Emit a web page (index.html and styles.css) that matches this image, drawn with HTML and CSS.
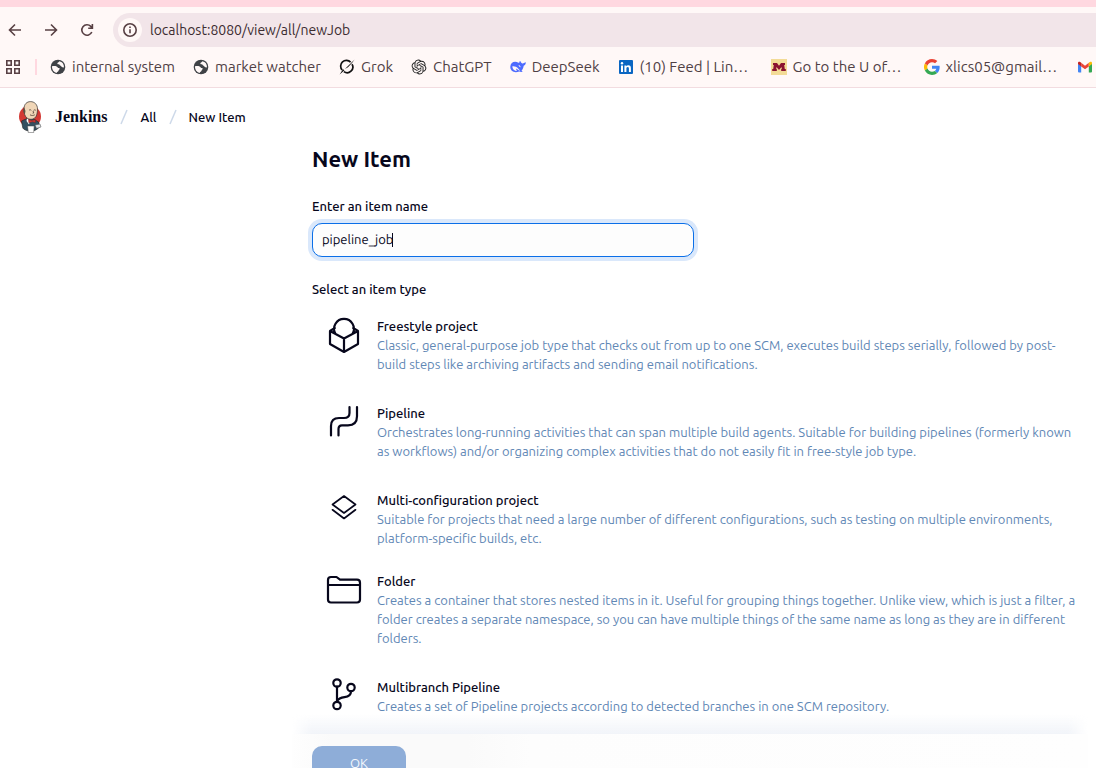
FILE: index.html
```html
<!DOCTYPE html>
<html lang="en">
<head>
<meta charset="utf-8">
<title>New Item - Jenkins</title>
<meta name="viewport" content="width=device-width, initial-scale=1">
<link rel="stylesheet" href="styles.css">
</head>
<body>
<div class="browser">
  <div class="tab-strip"></div>
  <div class="toolbar">
    <button class="nav-button" type="button" aria-label="Back"><svg class="icon" viewBox="0 0 16 16"><path d="M14 8H2.500M8 2.500 2.500 8 8 13.500"/></svg></button>
    <button class="nav-button" type="button" aria-label="Forward"><svg class="icon" viewBox="0 0 16 16"><path d="M2 8h11.500M8 2.500 13.500 8 8 13.500"/></svg></button>
    <button class="nav-button" type="button" aria-label="Reload"><svg class="icon" viewBox="0 0 16 16"><path d="M12.800 10A5.200 5.200 0 1 1 11.800 4.400L13.300 6M13.400 2v4.200H9.200"/></svg></button>
    <div class="address">
      <button class="site-info" type="button" aria-label="View site information"><svg class="icon" viewBox="0 0 16 16"><circle cx="8" cy="8" r="6.200"/><path d="M8 7.300v3.900M8 4.500v1.400"/></svg></button>
      <input class="url" type="text" aria-label="Address" value="localhost:8080/view/all/newJob">
    </div>
  </div>
  <nav class="bookmarks" aria-label="Bookmarks">
    <button class="apps" type="button" aria-label="Apps"><svg class="icon" viewBox="0 0 16 16"><path d="M1.800 1.800h4.400v4.400H1.800zM9.800 1.800h4.400v4.400H9.800zM1.800 9.800h4.400v4.400H1.800zM9.800 9.800h4.400v4.400H9.800z"/></svg></button>
    <span class="divider"></span>
    <a class="bookmark" href="#"><svg class="logo" viewBox="0 0 16 16"><circle cx="8" cy="8" r="7.300" fill="#3f4246"/><path d="M2 7.200c1.700-.2 3.500-.2 4.600.2 1.300.4 1 1.500 2.200 1.700 1 .2 1.300.8.500 1.500-.9.700-.6 1.700-1.600 2.100-.9.400-.9 1-1.200 1.300A6.200 6.200 0 0 1 2 7.200zM9.300 2.200c-.1 1-1.300 1-1.800 1.700-.5.900.3 1.500 1.300 1.400.8 0 .8 1 1.500 1.300 1 .4 1 1.400 2.100 1.600.7.100 1.100.4 1.600.1A6.200 6.200 0 0 0 9.300 2.200z" fill="#fff8f7"/></svg><span>internal system</span></a>
    <a class="bookmark" href="#"><svg class="logo" viewBox="0 0 16 16"><circle cx="8" cy="8" r="7.300" fill="#3f4246"/><path d="M2 7.200c1.700-.2 3.500-.2 4.600.2 1.300.4 1 1.500 2.200 1.700 1 .2 1.300.8.500 1.500-.9.700-.6 1.700-1.600 2.100-.9.400-.9 1-1.200 1.300A6.200 6.200 0 0 1 2 7.200zM9.300 2.200c-.1 1-1.300 1-1.800 1.700-.5.900.3 1.500 1.300 1.400.8 0 .8 1 1.500 1.300 1 .4 1 1.400 2.100 1.600.7.100 1.100.4 1.600.1A6.200 6.200 0 0 0 9.300 2.200z" fill="#fff8f7"/></svg><span>market watcher</span></a>
    <a class="bookmark" href="#"><svg class="logo" viewBox="0 0 16 16"><path d="M11.600 3.200A5.600 5.600 0 0 0 3.200 11M4.900 12.600A5.600 5.600 0 0 0 13 5.200" fill="none" stroke="#111" stroke-width="1.700"/><path d="M15.600.5 5.900 9.900 9 8.200l4.200-4.400zM.6 15.600 4 10.300l1.500 1z" fill="#111"/></svg><span>Grok</span></a>
    <a class="bookmark" href="#"><svg class="logo" viewBox="-1 -1 26 26"><path fill="#222" d="M22.282 9.821a5.985 5.985 0 0 0-.516-4.910 6.046 6.046 0 0 0-6.510-2.900A6.065 6.065 0 0 0 4.981 4.180a5.985 5.985 0 0 0-3.998 2.900 6.046 6.046 0 0 0 .743 7.097 5.980 5.980 0 0 0 .510 4.911 6.051 6.051 0 0 0 6.515 2.900A5.985 5.985 0 0 0 13.260 24a6.056 6.056 0 0 0 5.772-4.206 5.990 5.990 0 0 0 3.997-2.900 6.056 6.056 0 0 0-.747-7.073zM13.260 22.430a4.476 4.476 0 0 1-2.876-1.040l.141-.081 4.779-2.758a.795.795 0 0 0 .392-.681v-6.737l2.020 1.168a.071.071 0 0 1 .038.052v5.583a4.504 4.504 0 0 1-4.494 4.494zM3.600 18.304a4.470 4.470 0 0 1-.535-3.014l.142.085 4.783 2.759a.771.771 0 0 0 .780 0l5.843-3.369v2.332a.080.080 0 0 1-.033.062L9.740 19.950a4.500 4.500 0 0 1-6.140-1.646zM2.340 7.896a4.485 4.485 0 0 1 2.366-1.973V11.600a.766.766 0 0 0 .388.676l5.815 3.355-2.020 1.168a.076.076 0 0 1-.071 0l-4.830-2.786A4.504 4.504 0 0 1 2.340 7.872zm16.597 3.855-5.833-3.387L15.119 7.200a.076.076 0 0 1 .071 0l4.830 2.791a4.494 4.494 0 0 1-.676 8.105v-5.678a.790.790 0 0 0-.407-.667zm2.010-3.023-.141-.085-4.774-2.782a.776.776 0 0 0-.785 0L9.409 9.230V6.897a.066.066 0 0 1 .028-.061l4.830-2.787a4.500 4.500 0 0 1 6.680 4.660zM8.307 12.863l-2.020-1.164a.080.080 0 0 1-.038-.057V6.074a4.500 4.500 0 0 1 7.375-3.453l-.142.080L8.704 5.459a.795.795 0 0 0-.393.681zm1.097-2.365 2.602-1.500 2.607 1.500v2.999l-2.597 1.500-2.607-1.500z"/></svg><span>ChatGPT</span></a>
    <a class="bookmark" href="#"><svg class="logo" viewBox="0 0 16 16"><path fill="#4d6bfe" d="M.3 7.800C.5 4.500 2.600 2.800 5.100 2.800c1.300 0 2.400.3 3.200 1l1.200-.2c-.3-.7.1-1.400.8-1.600.4 1.300 1 2 2 2.400 1.200.2 2-.7 3.500-1.100.1 1.800-.8 3.100-2.100 3.400-.3 2-1 3.800-2.200 5l1.300.9c-1.200.6-2.500.4-3.600-.1C4.200 14.600.2 11.900.3 7.800z"/><path fill="#fff8f7" d="M2.300 7.400c2-.4 4.300.4 6.100 2.300l1.700 2.100c-1.600-.4-2.500-1.500-3.900-2.300-.2.900.2 1.700 1 2.600C4.300 12 2.400 10.100 2.300 7.400zM8.500 6.100c1.300.2 2 1 2.200 2.200-1-.2-2-1-2.200-2.200z"/></svg><span>DeepSeek</span></a>
    <a class="bookmark bookmark-full" href="#"><svg class="logo" viewBox="0 0 16 16"><rect x="1" y="1" width="14" height="14" rx="1" fill="#0a66c2"/><path fill="#fff" d="M3 6.400h2V13H3zM6.400 6.400h1.900v.9c.4-.7 1.100-1.100 2-1.100 2 0 2.600 1.200 2.600 3.200V13h-2V9.800c0-1.100-.2-1.800-1.200-1.800s-1.300.8-1.300 1.800V13h-2z"/><circle cx="4" cy="4.200" r="1.200" fill="#fff"/></svg><span>(10) Feed | Lin…</span></a>
    <a class="bookmark bookmark-full" href="#"><svg class="logo" viewBox="0 0 16 16"><path fill="#f3db96" d="M0 0h16v16H0z"/><path fill="#8b1230" d="M2 4h4l2 2.800L10 4h4v2h-.8l.6 4h1v2h-4.600v-2h.6l-.3-2L8 11 5.500 8l-.3 2h.6v2H1.200v-2h1l.6-4H2z"/></svg><span>Go to the U of…</span></a>
    <a class="bookmark bookmark-full" href="#"><svg class="logo" viewBox="0 0 48 48"><path fill="#ea4335" d="M24 9.500c3.540 0 6.710 1.220 9.210 3.600l6.850-6.850C35.900 2.380 30.470 0 24 0 14.620 0 6.510 5.380 2.560 13.220l7.980 6.190C12.430 13.720 17.740 9.500 24 9.500z"/><path fill="#4285f4" d="M46.980 24.550c0-1.570-.15-3.090-.38-4.550H24v9.020h12.940c-.58 2.960-2.260 5.480-4.780 7.180l7.730 6c4.510-4.180 7.090-10.360 7.090-17.650z"/><path fill="#fbbc05" d="M10.530 28.590a14.500 14.500 0 0 1 0-9.180l-7.980-6.190a24 24 0 0 0 0 21.560z"/><path fill="#34a853" d="M24 48c6.480 0 11.930-2.130 15.890-5.810l-7.730-6c-2.150 1.450-4.920 2.300-8.160 2.300-6.260 0-11.570-4.220-13.470-9.910l-7.980 6.190C6.510 42.620 14.620 48 24 48z"/></svg><span>xlics05@gmail…</span></a>
    <a class="bookmark" href="#" aria-label="Gmail"><svg class="logo" viewBox="0 0 16 16"><path fill="#4285f4" d="M1 4.500 4.200 7v6.500H2A1 1 0 0 1 1 12.500z"/><path fill="#34a853" d="M15 4.500 11.800 7v6.500H14a1 1 0 0 0 1-1z"/><path fill="#ea4335" d="M4.200 3.800 8 6.700l3.800-2.900v3.600L8 10.300 4.200 7.400z"/><path fill="#c5221f" d="M1 4.300c0-1.600 1.400-1.800 2.200-1.200l1 .7v3.600L1 5z"/><path fill="#fbbc04" d="M15 4.300c0-1.600-1.400-1.800-2.200-1.200l-1 .7v3.600L15 5z"/></svg></a>
  </nav>
</div>

<header class="header">
  <a class="brand" href="#">
    <svg class="mascot" viewBox="0 0 24 32">
      <ellipse cx="12" cy="15.500" rx="11" ry="11" fill="#d33833"/>
      <path d="M3.500 20 9 17.500l7 .5 5 3.500v4.500c-1 2.500-4.500 4-8.500 4S5.500 28.500 4.800 27z" fill="#335061" stroke="#222" stroke-width=".6"/>
      <path d="M6 8C6 3 9 .6 12.500.6c4 0 7 3 7 7.400 0 2-.2 4-.8 6-.9 2.700-3 4.300-5.700 4.300-3.500 0-5.400-2-6.400-5z" fill="#f0d6b7" stroke="#333" stroke-width=".7"/>
      <path d="M6.200 6.500 7.500 10l-.7 3.500C5 12 4.800 8.700 6.200 6.500z" fill="#5c5346"/>
      <path d="M11 9.300c.8-.7 1.700-.6 2.300 0M15.600 9.300c.8-.6 1.600-.5 2.200.1M12 13.800c1.600 1 3.500.8 4.800 0M15 10l.8 2-1.200.2" fill="none" stroke="#4a3b32" stroke-width=".8"/>
      <path d="m9 17.500 3 2-1 4L8.500 20z" fill="#fff"/>
      <path d="m10.500 18.500 3.200 1 3.500-.8.300 2.800-3.100-.7-3.500 1z" fill="#d33833" stroke="#7c1d1b" stroke-width=".5"/>
      <path d="M9.500 25h6.700l-.5 6.600h-5.400z" fill="#fff" stroke="#444" stroke-width=".5"/>
      <path d="m17 24 5-1 1 3-4.500 1.500z" fill="#dce3e8" stroke="#444" stroke-width=".5"/>
    </svg>
    <span>Jenkins</span>
  </a>
  <nav class="crumbs" aria-label="Breadcrumb">
    <svg class="slash" viewBox="0 0 8 16"><path d="M7 1 1 15"/></svg>
    <a class="crumb" href="#">All</a>
    <svg class="slash" viewBox="0 0 8 16"><path d="M7 1 1 15"/></svg>
    <a class="crumb" href="#">New Item</a>
  </nav>
</header>

<main class="page">
  <form class="form">
    <h1 class="title">New Item</h1>
    <label class="label" for="name">Enter an item name</label>
    <div class="field">
      <input class="name" id="name" type="text" value="pipeline_job" autocomplete="off" spellcheck="false">
      <span class="caret"></span>
    </div>
    <fieldset class="types">
      <legend class="label">Select an item type</legend>
      <label class="item">
        <input class="choice" type="radio" name="mode">
        <svg class="item-icon" viewBox="0 0 36 36"><path d="M8.800 11 4 14v13l14 8 14-8V14l-4.800-3M4 14l14 7.500L32 14M18 21.500V35M9.300 16.500A9.900 9.900 0 1 1 26.700 16.500"/></svg>
        <span class="item-text"><b class="item-name">Freestyle project</b><span class="item-desc">Classic, general-purpose job type that checks out from up to one SCM, executes build steps serially, followed by post-build steps like archiving artifacts and sending email notifications.</span></span>
      </label>
      <label class="item">
        <input class="choice" type="radio" name="mode">
        <svg class="item-icon" viewBox="0 0 36 36"><path d="M5 31.500V22c0-5 2.500-8 8-8h5c4 0 5.500-2 5.500-5V3M12.500 31.500V25c0-2.500 1-3.700 3.500-3.700h6c6 0 9-3.500 9-9V3"/></svg>
        <span class="item-text"><b class="item-name">Pipeline</b><span class="item-desc">Orchestrates long-running activities that can span multiple build agents. Suitable for building pipelines (formerly known as workflows) and/or organizing complex activities that do not easily fit in free-style job type.</span></span>
      </label>
      <label class="item item-compact">
        <input class="choice" type="radio" name="mode">
        <svg class="item-icon item-icon-fine" viewBox="0 0 36 36"><path d="M18 5 29.500 13.500 18 22 6.500 13.500zM6.500 18.800 18 27.500l11.500-8.700"/></svg>
        <span class="item-text"><b class="item-name">Multi-configuration project</b><span class="item-desc">Suitable for projects that need a large number of different configurations, such as testing on multiple environments, platform-specific builds, etc.</span></span>
      </label>
      <label class="item">
        <input class="choice" type="radio" name="mode">
        <svg class="item-icon" viewBox="0 0 36 36"><path d="M2 27.500V8C2 6 3 5 5 5h5.500l3.500 2.700h17c2 0 3 1 3 3v16.800c0 2-1 3-3 3H5c-2 0-3-1-3-3zM2 13h32"/></svg>
        <span class="item-text"><b class="item-name">Folder</b><span class="item-desc">Creates a container that stores nested items in it. Useful for grouping things together. Unlike view, which is just a filter, a folder creates a separate namespace, so you can have multiple things of the same name as long as they are in different folders.</span></span>
      </label>
      <label class="item">
        <input class="choice" type="radio" name="mode">
        <svg class="item-icon" viewBox="0 0 36 36"><circle cx="11" cy="5" r="3.700"/><circle cx="25" cy="9.500" r="3.700"/><circle cx="11" cy="27.500" r="3.700"/><path d="M11 8.700v15M25 13.200c0 4-2.500 5.500-6.500 6-3.500.5-6 1.300-7.500 4"/></svg>
        <span class="item-text"><b class="item-name">Multibranch Pipeline</b><span class="item-desc">Creates a set of Pipeline projects according to detected branches in one SCM repository.</span></span>
      </label>
    </fieldset>
    <div class="actions"><button class="ok" type="submit" disabled>OK</button></div>
  </form>
</main>
</body>
</html>
```

FILE: styles.css
```css
* { box-sizing: border-box; }
html { height: 100%; }
body {
  height: 100%;
  margin: 0;
  overflow: hidden;
  background: #fff;
  color: #07071c;
  font-family: Ubuntu, "Noto Sans", sans-serif;
  font-size: 13px;
  line-height: 19px;
}
button, input { font: inherit; color: inherit; }
a { color: inherit; text-decoration: none; }
svg { flex: none; display: block; }

.browser { background: #fff8f7; border-bottom: 1px solid #f2dce0; color: #4f4044; }
.tab-strip { height: 7px; background: #ffd8e0; }
.toolbar { display: flex; align-items: center; height: 46px; padding-left: 7px; gap: 20px; }
.nav-button, .apps, .site-info { display: flex; padding: 0; border: 0; background: none; }
.icon { width: 16px; height: 16px; fill: none; stroke: #584044; stroke-width: 1.600; }
.address {
  display: flex;
  flex: 1;
  align-items: center;
  gap: 8px;
  height: 34px;
  margin-left: -2px;
  padding-left: 5px;
  border-radius: 17px 0 0 17px;
  background: #f2e5e9;
}
.site-info { padding: 4px; border-radius: 50%; background: #fff8f7; }
.url { flex: 1; padding: 0; border: 0; outline: 0; background: none; font-size: 14px; color: #3c2c30; }

.bookmarks { display: flex; align-items: center; height: 34px; padding: 0 0 7px 5px; font-size: 15px; overflow: hidden; white-space: nowrap; }
.divider { flex: none; width: 2px; height: 16px; margin: 0 13px 0 14px; background: #ffd8e0; }
.bookmark { display: flex; flex: none; align-items: center; gap: 6px; margin-right: 18px; }
.bookmark-full { width: 135px; }
.logo { width: 16px; height: 16px; }

.header { display: flex; align-items: center; height: 58px; padding-left: 18px; gap: 13px; }
.brand { display: flex; align-items: center; gap: 13px; font: bold 16px "Liberation Serif", serif; }
.mascot { width: 24px; height: 32px; }
.crumbs { display: flex; align-items: center; gap: 12px; font-weight: 500; }
.slash { width: 8px; height: 16px; fill: none; stroke: #cdd9e9; stroke-width: 1.500; }

.page { padding: 0 16px 0 312px; }
.form { display: flex; flex-direction: column; }
.title { margin: 0 0 25px; font-size: 22px; line-height: 26px; }
.label { padding: 0; font-weight: 500; }
.field { position: relative; width: 382px; max-width: 100%; margin: 7px 0 23px; }
.name {
  display: block;
  width: 100%;
  height: 34px;
  padding: 0 9px;
  border: 1px solid #0b6fe8;
  border-radius: 10px;
  outline: 0;
  background: #fdfdfd;
  box-shadow: 0 0 0 4px #dae8fb;
  text-rendering: geometricPrecision;
}
.caret { position: absolute; top: 10px; left: 80px; width: 1px; height: 14px; background: #07071c; }
.types { margin: 0; padding: 0; border: 0; min-width: 0; }
.types > .label { margin-bottom: 18px; }
.item { position: relative; display: flex; gap: 15px; padding-left: 14px; margin-bottom: 30px; }
.item-compact { margin-bottom: 24px; }
.item:last-child { margin-bottom: 0; }
.choice { position: absolute; opacity: 0; margin: 0; }
.item-icon { width: 36px; height: 36px; overflow: visible; fill: none; stroke: #07071c; stroke-width: 2.200; stroke-linejoin: round; stroke-linecap: round; }
.item-icon-fine { stroke-width: 1.700; }
.item-text { display: flex; flex-direction: column; min-width: 0; }
.item-name { font-weight: 500; }
.item-desc { color: #5f87b5; }
.actions {
  position: relative;
  height: 58px;
  margin: 18px -8px 0 -20px;
  padding: 12px 20px;
  background: linear-gradient(90deg, #fefefe, #fafafa 5%, #fafafa 22%, #fdfdfd 30%, #fefefe);
}
.actions::before {
  content: "";
  position: absolute;
  right: 0;
  bottom: 100%;
  left: 0;
  height: 20px;
  background: linear-gradient(rgba(228, 233, 243, 0), rgba(228, 233, 243, .5));
  mask-image: linear-gradient(90deg, transparent, #000 20px, #000 calc(100% - 20px), transparent);
}
.ok { display: block; width: 94px; height: 34px; padding: 0; border: 0; border-radius: 10px; background: #8eadd8; color: #f4f8fd; }
```
